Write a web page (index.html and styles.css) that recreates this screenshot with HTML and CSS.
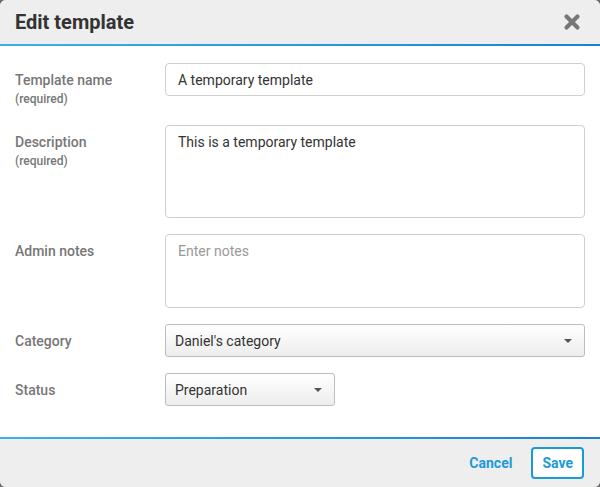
FILE: index.html
```html
<!DOCTYPE html>
<html lang="en">

<head>
    <meta charset="UTF-8">
    <meta name="viewport" content="width=device-width, initial-scale=1.0">
    <title>Edit template</title>
    <link rel="stylesheet" href="styles.css">
</head>

<body>

    <div class="dialog">
        <div class="dialog-header">
            <h1>Edit template</h1>
            <button class="close-button" aria-label="Close">
                <svg width="18" height="18" viewBox="0 0 18 18">
                    <path d="M3.5 3.5 L14.5 14.5 M14.5 3.5 L3.5 14.5" stroke="#777" stroke-width="4.2" stroke-linecap="round" />
                </svg>
            </button>
        </div>

        <form class="dialog-body">
            <div class="campo">
                <label for="nome">Template name<span class="obrigatorio">(required)</span></label>
                <input type="text" id="nome" value="A temporary template">
            </div>
            <div class="campo">
                <label for="descricao">Description<span class="obrigatorio">(required)</span></label>
                <textarea id="descricao" class="descricao">This is a temporary template</textarea>
            </div>
            <div class="campo">
                <label for="notas">Admin notes</label>
                <textarea id="notas" class="notas" placeholder="Enter notes"></textarea>
            </div>
            <div class="campo">
                <label for="categoria">Category</label>
                <div class="select">
                    <span>Daniel's category</span>
                    <span class="caret"></span>
                </div>
            </div>
            <div class="campo">
                <label for="status">Status</label>
                <div class="select select-curto">
                    <span>Preparation</span>
                    <span class="caret"></span>
                </div>
            </div>
        </form>

        <div class="dialog-footer">
            <button class="link-button">Cancel</button>
            <button class="save-button">Save</button>
        </div>
    </div>

</body>

</html>
```

FILE: styles.css
```css
body {
    margin: 0;
    font-family: Roboto, "Liberation Sans", Arial, sans-serif;
    background-color: #6b6b6b;
}

.dialog {
    width: 600px;
    height: 487px;
    background-color: white;
    border-radius: 6px;
    overflow: hidden;
    display: flex;
    flex-direction: column;
}

.dialog-header {
    height: 44px;
    background-color: #eeeeee;
    display: flex;
    align-items: center;
    justify-content: space-between;
    padding: 0 15px;
    position: relative;
}

/* blue rule under the header and above the footer */
.dialog-header::after,
.dialog-footer::before {
    content: "";
    position: absolute;
    left: 0;
    right: 0;
    height: 2px;
    background: linear-gradient(to right, #3cb0e6, #1a82cf);
}

.dialog-header::after {
    bottom: -2px;
}

.dialog-footer::before {
    top: 0;
}

h1 {
    margin: 0;
    font-size: 20px;
    font-weight: 700;
    color: #333;
}

.close-button {
    background: none;
    border: none;
    padding: 0;
    margin-right: 4px;
    display: flex;
    cursor: pointer;
}

.dialog-body {
    flex: 1;
    padding: 17px 15px 0 15px;
    margin-top: 2px;
}

.campo {
    display: flex;
    align-items: flex-start;
    margin-bottom: 16px;
}

.campo label {
    width: 150px;
    flex-shrink: 0;
    padding-top: 7px;
    font-size: 14px;
    font-weight: 500;
    line-height: 20px;
    color: #777;
}

.obrigatorio {
    display: block;
    font-size: 12px;
    line-height: 19px;
    color: #777;
}

input[type="text"],
textarea {
    flex: 1;
    box-sizing: border-box;
    border: 1px solid #cfcfcf;
    border-radius: 4px;
    padding: 7px 12px;
    font-family: inherit;
    font-size: 14px;
    line-height: 18px;
    color: #333;
    resize: none;
    outline: none;
}

input[type="text"] {
    height: 33px;
}

.descricao {
    height: 93px;
}

.notas {
    height: 74px;
}

textarea::placeholder {
    color: #999;
}

.select {
    flex: 1;
    box-sizing: border-box;
    height: 33px;
    display: flex;
    align-items: center;
    justify-content: space-between;
    padding: 0 12px 0 9px;
    border: 1px solid #bdbdbd;
    border-radius: 3px;
    background: linear-gradient(to bottom, #ffffff, #ededed);
    font-size: 14px;
    color: #333;
}

.select-curto {
    flex: 0 0 170px;
}

.caret {
    width: 0;
    height: 0;
    border-left: 4px solid transparent;
    border-right: 4px solid transparent;
    border-top: 4px solid #555;
}

.dialog-footer {
    position: relative;
    height: 50px;
    box-sizing: border-box;
    padding: 2px 16px 0 15px;
    background-color: #eeeeee;
    display: flex;
    align-items: center;
    justify-content: flex-end;
    gap: 19px;
}

.link-button,
.save-button {
    font-family: inherit;
    font-size: 14px;
    font-weight: 700;
    color: #1b9ad8;
    background: none;
    cursor: pointer;
}

.link-button {
    border: none;
    padding: 0;
}

.save-button {
    height: 32px;
    padding: 0 9px;
    border: 2px solid #1b9ad8;
    border-radius: 4px;
    background-color: white;
}
```
